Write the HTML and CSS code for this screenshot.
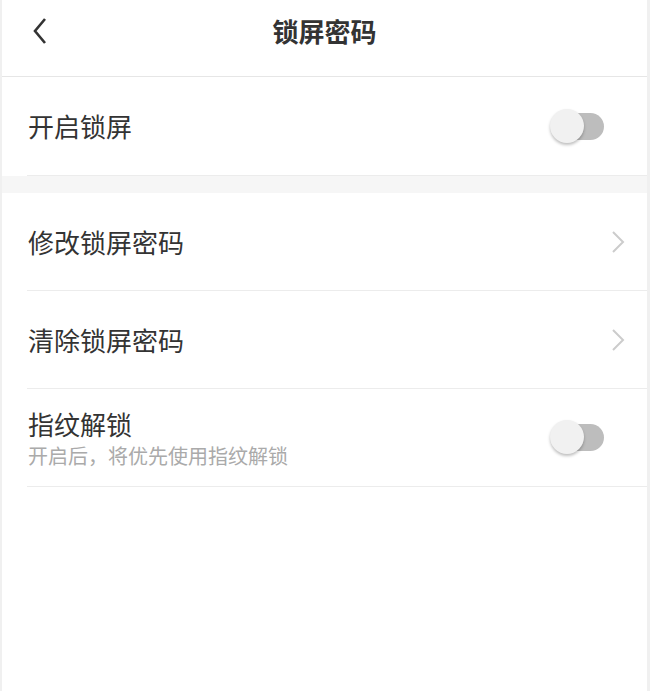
FILE: index.html
```html
<!DOCTYPE html>
<html>
<head>
    <meta charset="utf-8">
    <title>锁屏密码</title>
    <link rel="stylesheet" href="styles.css">
</head>
<body>
    <div class="page">
        <div class="header">
            <span class="back">
                <svg width="16" height="28" viewBox="0 0 16 28"><path d="M13 2 L3 14 L13 26" fill="none" stroke="#333" stroke-width="2.6"/></svg>
            </span>
            <h1 class="title">锁屏密码</h1>
        </div>

        <div class="group">
            <div class="row row-top">
                <span class="label">开启锁屏</span>
                <span class="switch"><span class="thumb"></span></span>
            </div>
        </div>

        <div class="gap"></div>

        <div class="group">
            <div class="row">
                <span class="label">修改锁屏密码</span>
                <svg class="arrow" width="14" height="24" viewBox="0 0 14 24"><path d="M2 2 L12 12 L2 22" fill="none" stroke="#ccc" stroke-width="2"/></svg>
            </div>
            <div class="row">
                <span class="label">清除锁屏密码</span>
                <svg class="arrow" width="14" height="24" viewBox="0 0 14 24"><path d="M2 2 L12 12 L2 22" fill="none" stroke="#ccc" stroke-width="2"/></svg>
            </div>
            <div class="row">
                <div class="text">
                    <span class="label">指纹解锁</span>
                    <span class="desc">开启后，将优先使用指纹解锁</span>
                </div>
                <span class="switch"><span class="thumb"></span></span>
            </div>
        </div>
    </div>
</body>
</html>
```

FILE: styles.css
```css
body {
    margin: 0;
    font-family: "Noto Sans CJK SC", "Noto Sans", sans-serif;
    color: #333;
    background: #fff;
}

.page {
    min-height: 691px;
    border-left: 2px solid #f0f0f0;
    border-right: 3px solid #f0f0f0;
    box-sizing: border-box;
}

.header {
    position: relative;
    height: 76px;
    display: flex;
    align-items: center;
    justify-content: center;
    border-bottom: 1px solid #e6e6e6;
}

.back {
    position: absolute;
    left: 30px;
    top: 17px;
}

.title {
    margin: 0 0 14px;
    font-size: 26px;
    font-weight: bold;
    color: #333;
    line-height: 1;
}

.gap {
    height: 17px;
    background: #f6f6f6;
}

.row {
    height: 97px;
    margin-left: 25px;
    padding-right: 25px;
    display: flex;
    align-items: center;
    justify-content: space-between;
    border-bottom: 1px solid #ececec;
}

.row-top {
    height: 98px;
}

.label {
    font-size: 26px;
    line-height: 1;
    padding-left: 1px;
}

.text {
    display: flex;
    flex-direction: column;
    gap: 9px;
    padding-top: 2px;
}

.desc {
    font-size: 20px;
    line-height: 1;
    color: #aaa;
    padding-left: 1px;
}

.arrow {
    margin-right: -3px;
}

.switch {
    position: relative;
    width: 46px;
    height: 27px;
    margin-right: 18px;
    border-radius: 14px;
    background: #bdbdbd;
}

.thumb {
    position: absolute;
    left: -8px;
    top: -4px;
    width: 34px;
    height: 34px;
    border-radius: 50%;
    background: #f1f1f1;
    box-shadow: 0 2px 3px rgba(0, 0, 0, 0.25);
}
```
